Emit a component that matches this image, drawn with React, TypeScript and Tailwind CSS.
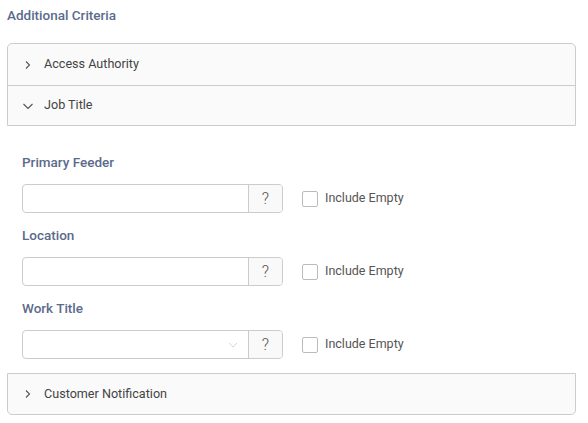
import React from "react";

const ChevronRight = () => (
  <svg width="10" height="10" viewBox="0 0 10 10" className="shrink-0">
    <polyline points="3,1.5 6.5,5 3,8.5" fill="none" stroke="#555" strokeWidth="1.1" />
  </svg>
);
const ChevronDown = () => (
  <svg width="12" height="10" viewBox="0 0 12 10" className="shrink-0">
    <polyline points="1.5,3 6,7.5 10.5,3" fill="none" stroke="#555" strokeWidth="1.1" />
  </svg>
);

const Field = ({ label, select }: { label: string; select?: boolean }) => (
  <div className="flex flex-col">
    <div className="h-5 leading-5 text-[13.5px] font-medium text-[#5b6b8c]">{label}</div>
    <div className="mt-3 flex items-center">
      <div className="flex h-[29px] w-[261px] rounded-[4px] border border-[#cccccc] bg-white overflow-hidden">
        <div className="flex-1 flex items-center justify-end pr-[10px]">
          {select && (
            <svg width="10" height="8" viewBox="0 0 10 8">
              <polyline points="1,2 5,6 9,2" fill="none" stroke="#d4d4d4" strokeWidth="1" />
            </svg>
          )}
        </div>
        <div className="w-[34px] border-l border-[#cccccc] bg-[#f9f9f9] flex items-center justify-center text-[16px] font-light text-[#555]">
          ?
        </div>
      </div>
      <div className="ml-[19px] w-4 h-4 rounded-[2px] border border-[#bbbbbb] bg-white" />
      <div className="ml-[7px] text-[12.5px] text-[#555]">Include Empty</div>
    </div>
  </div>
);

export default function App() {
  return (
    <div className="w-[588px] h-[423px] bg-white" style={{ fontFamily: "Roboto, 'Liberation Sans', sans-serif" }}>
      <div className="pt-[5px] pl-[7px]">
        <div className="h-5 leading-5 text-[13.5px] font-medium text-[#5b6b8c]">Additional Criteria</div>
      </div>
      <div className="ml-[7px] w-[569px] mt-[18px]">
        <div className="rounded-t-[5px] border border-[#cccccc] bg-[#fafafa]">
          <div className="h-[41px] flex items-center pl-[15px] gap-[11px] text-[12.6px] text-[#444]">
            <ChevronRight />
            <span>Access Authority</span>
          </div>
          <div className="h-[40px] border-t border-[#cccccc] flex items-center pl-[14px] gap-[10px] text-[12.6px] text-[#444]">
            <ChevronDown />
            <span>Job Title</span>
          </div>
        </div>
        <div className="pt-[26px] pb-[14px] pl-[15px] flex flex-col gap-3">
          <Field label="Primary Feeder" />
          <Field label="Location" />
          <Field label="Work Title" select />
        </div>
        <div className="rounded-b-[5px] border border-[#cccccc] bg-[#fafafa]">
          <div className="h-[40px] flex items-center pl-[15px] gap-[11px] text-[12.6px] text-[#444]">
            <ChevronRight />
            <span>Customer Notification</span>
          </div>
        </div>
      </div>
    </div>
  );
}
